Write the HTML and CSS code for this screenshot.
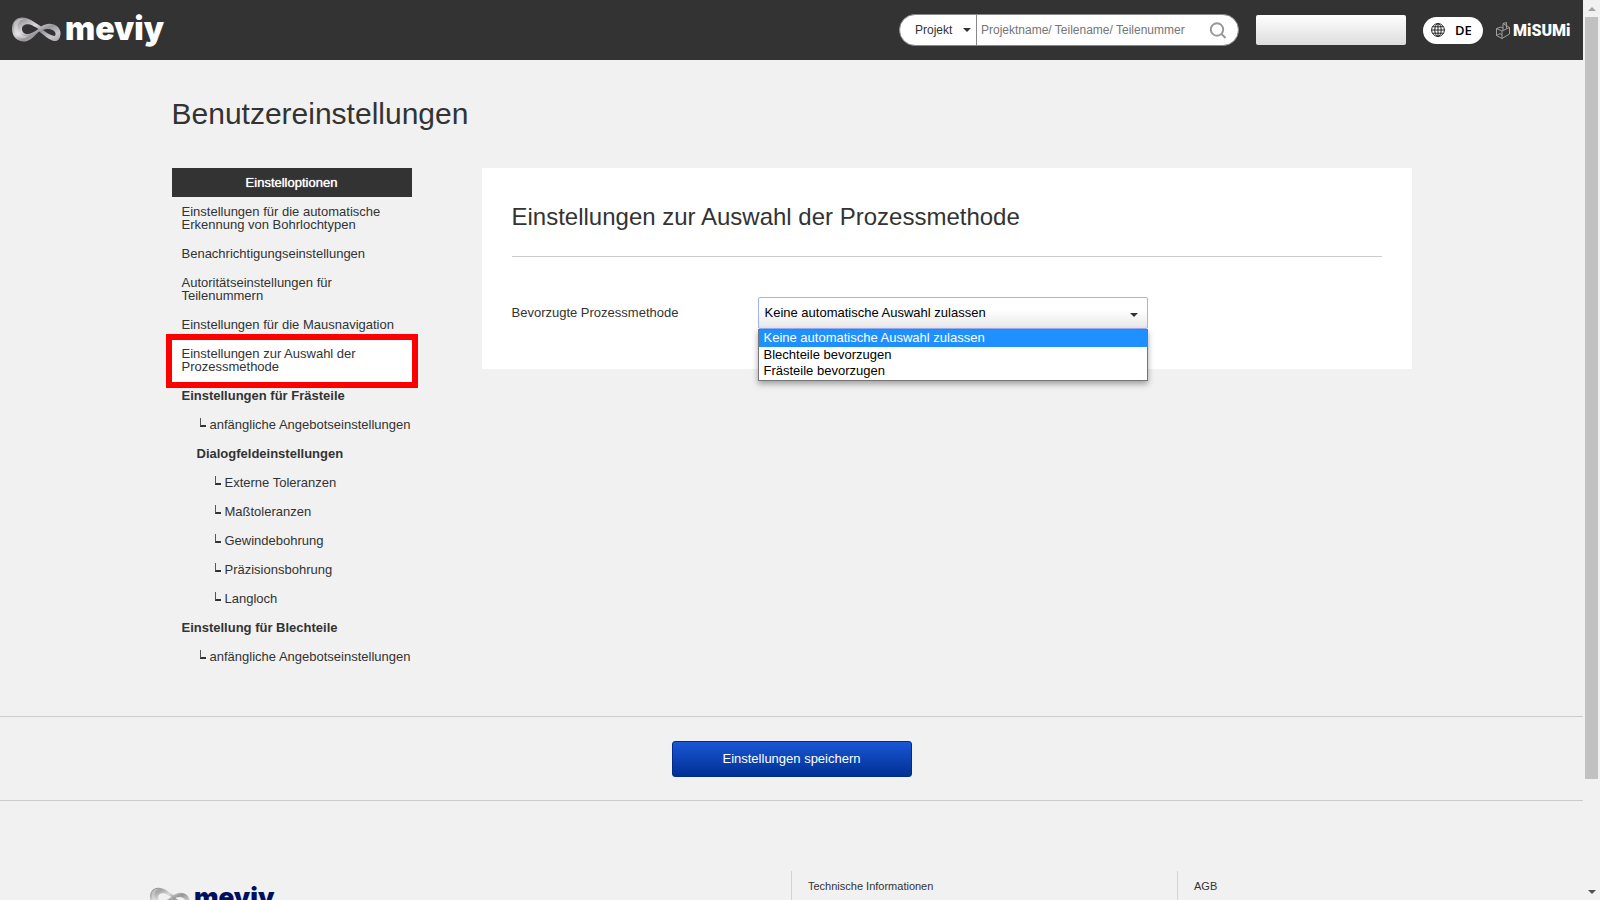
FILE: index.html
```html
<!DOCTYPE html>
<html lang="de">
<head>
<meta charset="utf-8">
<title>meviy – Benutzereinstellungen</title>
<link rel="stylesheet" href="styles.css">
</head>
<body>
<svg class="defs" width="0" height="0" aria-hidden="true">
  <defs>
    <linearGradient id="silver" x1="0" y1="0" x2="1" y2="1">
      <stop offset="0" stop-color="#858286"/>
      <stop offset="0.2" stop-color="#a9a6aa"/>
      <stop offset="0.4" stop-color="#dcd9dd"/>
      <stop offset="0.58" stop-color="#98959a"/>
      <stop offset="0.8" stop-color="#c9c6cb"/>
      <stop offset="1" stop-color="#a3a0a4"/>
    </linearGradient>
    <symbol id="loop" viewBox="0 0 49 25">
      <path fill="url(#silver)" fill-rule="evenodd" d="M10 0.500C17 0.500 22 5 29 9.500C34 6.500 38 6 42 7.500C46 9 49 13 48.500 17C48 22 46 24.500 42 24C37 23 32 18 27 14.500C22 19 18 24.500 12 24.500C5 24.500 0 19 0 12C0 5 4 0.500 10 0.500ZM10 12C10 14.500 11.500 16.500 14 17C18 17.500 22 15 26.500 12C23 10 21 8.500 18 7.500C14 6.500 10 8 10 12ZM31 13C35 16 39 18.500 42.500 19C44 18.500 44 16 42 14C39 11.500 34 11.500 31 13Z"/>
      <path fill="#f3f1f5" fill-opacity=".4" d="M2 6C4 2 9 1 12 2C7 3 5 7 6 12C7 17 11 20 16 19C11 24 3 20 2 13Z"/>
    </symbol>
  </defs>
</svg>
<div class="window">
  <div class="page">
    <header class="topbar">
      <a class="logo" href="#"><svg class="logo-mark" aria-hidden="true"><use href="#loop"/></svg><span>meviy</span></a>
      <form class="search">
        <div class="search-scope"><select aria-label="Suchbereich"><option>Projekt</option></select></div>
        <input class="search-input" type="text" aria-label="Suche" placeholder="Projektname/ Teilename/ Teilenummer">
        <button class="search-button" type="button" aria-label="Suchen">
          <svg width="16" height="17" viewBox="0 0 16 17" fill="none" stroke="#999" stroke-width="2"><circle cx="7" cy="7.500" r="6.200"/><path d="M11.500 12L15.500 16"/></svg>
        </button>
      </form>
      <button class="account" type="button" aria-label="Konto"></button>
      <button class="language" type="button">
        <svg width="14" height="14" viewBox="0 0 14 14" fill="none" stroke="#222" aria-hidden="true"><circle cx="7" cy="7" r="6.400"/><ellipse cx="7" cy="7" rx="3.200" ry="6.400"/><path d="M7 .5V13.500M.5 7H13.500M1.500 3.800H12.500M1.500 10.200H12.500"/></svg>
        <span>DE</span>
      </button>
      <a class="misumi" href="#">
        <svg width="14" height="17" viewBox="0 0 14 17" fill="none" stroke="#aaa" stroke-width=".9" aria-hidden="true"><path d="M.5 6.500L6 9V16.500L.5 13.500ZM.5 6.500L5 5L7 6M6 9L13.500 5.500V12L6 16.500M7 8V1.500L10.500.5V6.500M7 1.500L13.500 5.500M.5 13.500L4 11.500L6 13"/></svg>
        <span>MiSUMi</span>
      </a>
    </header>

    <main>
      <div class="container">
        <h1>Benutzereinstellungen</h1>
        <div class="columns">
          <nav class="sidebar" aria-labelledby="nav-title">
            <h2 id="nav-title">Einstelloptionen</h2>
            <ul>
              <li><a href="#">Einstellungen für die automatische Erkennung von Bohrlochtypen</a></li>
              <li><a href="#">Benachrichtigungseinstellungen</a></li>
              <li><a href="#">Autoritätseinstellungen für Teilenummern</a></li>
              <li><a href="#">Einstellungen für die Mausnavigation</a></li>
              <li class="current"><a href="#" aria-current="page">Einstellungen zur Auswahl der Prozessmethode</a></li>
              <li class="group">Einstellungen für Frästeile</li>
              <li class="leaf"><a href="#">anfängliche Angebotseinstellungen</a></li>
              <li class="group nested">Dialogfeldeinstellungen</li>
              <li class="leaf nested"><a href="#">Externe Toleranzen</a></li>
              <li class="leaf nested"><a href="#">Maßtoleranzen</a></li>
              <li class="leaf nested"><a href="#">Gewindebohrung</a></li>
              <li class="leaf nested"><a href="#">Präzisionsbohrung</a></li>
              <li class="leaf nested"><a href="#">Langloch</a></li>
              <li class="group">Einstellung für Blechteile</li>
              <li class="leaf"><a href="#">anfängliche Angebotseinstellungen</a></li>
            </ul>
          </nav>
          <section class="panel">
            <h2>Einstellungen zur Auswahl der Prozessmethode</h2>
            <div class="field">
              <label for="method">Bevorzugte Prozessmethode</label>
              <div class="dropdown">
                <select id="method"><option>Keine automatische Auswahl zulassen</option></select>
                <ul class="options" role="listbox" aria-label="Bevorzugte Prozessmethode">
                  <li role="option" aria-selected="true">Keine automatische Auswahl zulassen</li>
                  <li role="option">Blechteile bevorzugen</li>
                  <li role="option">Frästeile bevorzugen</li>
                </ul>
              </div>
            </div>
          </section>
        </div>
      </div>
      <div class="actions"><button class="save" type="button">Einstellungen speichern</button></div>
    </main>

    <footer class="footer">
      <a class="logo footer-logo" href="#"><svg class="logo-mark" aria-hidden="true"><use href="#loop"/></svg><span>meviy</span></a>
      <div class="footer-column"><a href="#">Technische Informationen</a></div>
      <div class="footer-column"><a href="#">AGB</a></div>
    </footer>
  </div>
  <div class="scrollbar" aria-hidden="true">
    <span class="arrow up"></span>
    <span class="track"><span class="thumb"></span></span>
    <span class="arrow down"></span>
  </div>
</div>
</body>
</html>
```
FILE: styles.css
```css
*, ::before, ::after { box-sizing: border-box; }
body {
  margin: 0;
  background: #f1f1f1;
  color: #333;
  font: 13px/13px "Liberation Sans", Arial, sans-serif;
}
a { color: inherit; text-decoration: none; }
ul { list-style: none; margin: 0; padding: 0; }
h1, h2 { margin: 0; }
button, input, select { font: inherit; color: inherit; margin: 0; }
.defs { position: absolute; }

.window { display: flex; height: 100vh; overflow: hidden; }
.page { flex: 1; min-width: 0; overflow: hidden; }

/* top bar */
.topbar {
  display: flex;
  align-items: center;
  height: 60px;
  padding: 0 12px;
  background: #333;
}
.logo {
  display: flex;
  align-items: center;
  gap: 4px;
  color: #fff;
  font: 900 32px/38px Inter, "Open Sans", sans-serif;
}
.logo-mark { width: 49px; height: 25px; }
.topbar .logo { margin-right: auto; padding-bottom: 2px; }
.search {
  display: flex;
  width: 340px;
  height: 32px;
  border: 1px solid #888;
  border-radius: 16px;
  background: #fff;
  overflow: hidden;
  font-size: 12px;
}
.search-scope {
  position: relative;
  display: flex;
  width: 77px;
  border-right: 1px solid #888;
}
.search-scope select {
  appearance: none;
  width: 100%;
  padding: 0 0 0 15px;
  border: 0;
  background: none;
}
.search-scope::after,
.dropdown::after {
  content: "";
  position: absolute;
  right: 10px;
  top: 16px;
  border: 4px solid transparent;
  border-top-color: #333;
  border-bottom: 0;
  pointer-events: none;
}
.search-scope::after { right: 5px; top: 13px; }
.search-input {
  flex: 1;
  min-width: 0;
  padding: 0 4px;
  border: 0;
  background: none;
}
.search-input::placeholder { color: #757575; }
.search-button {
  display: grid;
  place-items: center;
  width: 40px;
  padding: 0;
  border: 0;
  background: none;
}
.account {
  width: 150px;
  height: 30px;
  margin: 0 17px;
  border: 0;
  border-radius: 2px;
  background: linear-gradient(#fff, #ddd);
}
.language {
  display: flex;
  align-items: center;
  gap: 10px;
  width: 60px;
  height: 27px;
  padding: 0 8px;
  border: 0;
  border-radius: 14px;
  background: #fff;
  color: #000;
  font: 600 13px/16px "Open Sans", sans-serif;
}
.misumi {
  display: flex;
  align-items: center;
  gap: 3px;
  width: 75px;
  margin-left: 13px;
  padding-top: 1px;
  color: #fff;
  font: 900 16px/20px Roboto, sans-serif;
}

/* settings */
.container {
  width: 1240px;
  max-width: 100%;
  margin: 0 auto;
  padding: 36px 0 45px;
}
h1 { font-size: 30px; line-height: 36px; font-weight: 400; }
.columns {
  display: flex;
  align-items: flex-start;
  gap: 70px;
  padding-top: 36px;
}
.sidebar { width: 240px; flex: none; }
.sidebar h2 {
  padding: 8px 10px;
  background: #333;
  color: #fff;
  font-size: 13px;
  line-height: 13px;
  font-weight: 400;
  text-align: center;
  text-shadow: 0 0 1px #fff;
}
.sidebar li { padding: 8px 0 8px 10px; }
.sidebar .group { font-weight: 700; }
.sidebar .nested { padding-left: 25px; }
.sidebar .current {
  position: relative;
  margin: 1px 0 -1px;
  padding: 7px 0 9px 10px;
  background: #fff;
  box-shadow: 0 0 0 6px #f00;
}
.sidebar .leaf { display: flex; gap: 4px; padding-left: 28px; white-space: nowrap; }
.sidebar .leaf.nested { padding-left: 43px; }
.leaf::before {
  content: "";
  width: 6px;
  height: 9px;
  border-left: 1px solid #555;
  border-bottom: 2px solid #333;
}

.panel { flex: 1; min-width: 0; padding: 30px 30px 40px; background: #fff; }
.panel h2 {
  padding: 4px 0 24px;
  border-bottom: 1px solid #ccc;
  font-size: 24px;
  line-height: 30px;
  font-weight: 400;
}
.field { display: flex; align-items: center; padding-top: 40px; }
.field label { width: 246px; flex: none; padding-bottom: 2px; }
.dropdown { position: relative; width: 390px; color: #000; }
.dropdown select {
  appearance: none;
  display: block;
  width: 100%;
  height: 32px;
  padding: 0 6px 2px;
  border: 1px solid #a3b1f5;
  border-radius: 2px;
  background: linear-gradient(#fff 40%, #e8e8e8);
}
.options {
  position: absolute;
  z-index: 1;
  top: 100%;
  left: 0;
  right: 0;
  padding-bottom: 1px;
  border: 1px solid #767676;
  background: #fff;
  box-shadow: 0 3px 6px rgba(0, 0, 0, .35);
  line-height: 16px;
}
.options li { padding: 0 5px; }
.options [aria-selected="true"] { padding-bottom: 1px; background: #1e90ff; color: #fff; }

.actions {
  display: flex;
  justify-content: center;
  padding: 24px 0 23px;
  border: solid #ccc;
  border-width: 1px 0;
}
.save {
  width: 240px;
  height: 36px;
  padding: 0 0 2px;
  border: 1px solid #002b8c;
  border-radius: 3px;
  background: linear-gradient(#1a56d6, #003093);
  color: #fff;
}

/* footer */
.footer {
  display: grid;
  grid-template-columns: 641fr 386fr 406fr;
  padding: 70px 0 0 150px;
  font-size: 11px;
}
.footer-logo {
  align-items: flex-start;
  gap: 4px;
  padding-top: 7px;
  color: #001060;
  font-size: 26px;
}
.footer-logo .logo-mark { width: 40px; height: 21px; margin-top: 9px; }
.footer-column { min-height: 120px; padding: 9px 16px; border-left: 1px solid #d4d4d4; }

/* scrollbar */
.scrollbar {
  display: flex;
  flex-direction: column;
  width: 17px;
  padding: 0 2px;
  background: #f1f1f1;
}
.track { flex: 1; }
.thumb { display: block; height: 88%; background: #c1c1c1; }
.arrow { height: 17px; display: grid; place-items: center; }
.arrow::before { content: ""; border: 4px solid transparent; }
.up::before { border-top: 0; border-bottom-color: #a3a3a3; }
.down::before { border-bottom: 0; border-top-color: #505050; }
```
